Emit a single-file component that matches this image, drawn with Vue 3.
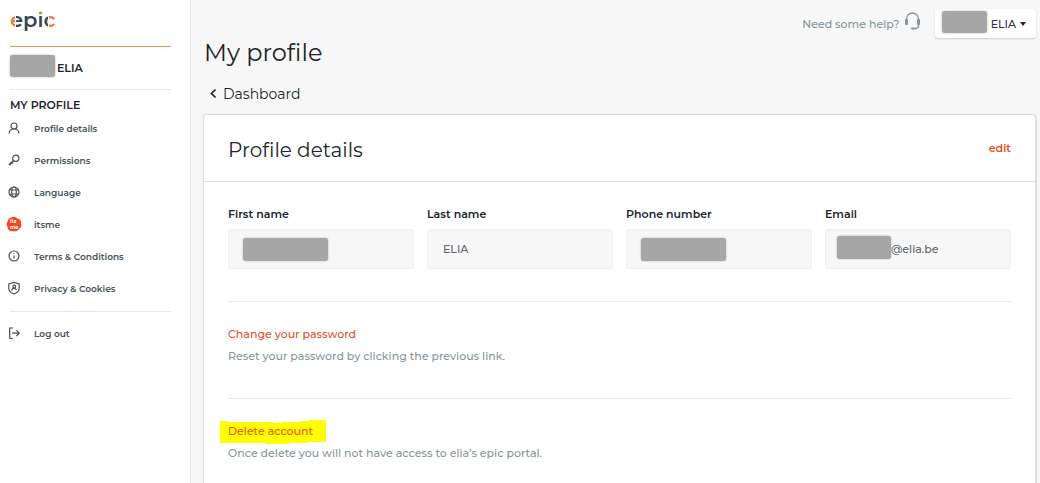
<script setup>
const links = [
  { label: 'Profile details', icon: 'user' },
  { label: 'Permissions', icon: 'key' },
  { label: 'Language', icon: 'globe' },
  { label: 'itsme', icon: 'itsme' },
  { label: 'Terms & Conditions', icon: 'info' },
  { label: 'Privacy & Cookies', icon: 'shield' }
]
const fields = [
  { id: 'first', label: 'First name', value: '', mask: 'wide' },
  { id: 'last', label: 'Last name', value: 'ELIA', mask: '' },
  { id: 'phone', label: 'Phone number', value: '', mask: 'wide' },
  { id: 'email', label: 'Email', value: '@elia.be', mask: 'prefix' }
]
</script>

<template>
  <div class="page">
    <aside class="sidebar">
      <a class="logo" href="#" aria-label="epic">
        <svg width="50" height="40" viewBox="0 0 50 40">
          <defs>
            <linearGradient id="ge" gradientUnits="userSpaceOnUse" x1="0" y1="0" x2="12" y2="0">
              <stop offset=".4" stop-color="#ee7d32" /><stop offset=".4" stop-color="#fff" />
              <stop offset=".5" stop-color="#fff" /><stop offset=".5" stop-color="#36474d" />
            </linearGradient>
            <linearGradient id="gi" gradientUnits="userSpaceOnUse" x1="0" y1="0" x2="0" y2="40">
              <stop offset=".38" stop-color="#ee7d32" /><stop offset=".38" stop-color="#36474d" />
            </linearGradient>
            <linearGradient id="gc" gradientUnits="userSpaceOnUse" x1="32" y1="0" x2="44" y2="0">
              <stop offset=".5" stop-color="#36474d" /><stop offset=".5" stop-color="#fff" />
              <stop offset=".62" stop-color="#fff" /><stop offset=".62" stop-color="#ee7d32" />
            </linearGradient>
          </defs>
          <text class="wordmark" x="0" y="27"><tspan fill="url(#ge)">e</tspan><tspan fill="#36474d">p</tspan><tspan fill="url(#gi)">i</tspan><tspan fill="url(#gc)">c</tspan></text>
        </svg>
      </a>
      <div class="person"><span class="mask small"></span><span>ELIA</span></div>
      <h2>MY PROFILE</h2>
      <nav>
        <a v-for="link in links" :key="link.label" href="#">
          <svg v-if="link.icon === 'user'" viewBox="0 0 14 14"><circle cx="7" cy="5" r="3" /><path d="M2.200 12.600V12c0-2.400 2-4 4.800-4s4.800 1.600 4.800 4v.6" /></svg>
          <svg v-else-if="link.icon === 'key'" viewBox="0 0 14 14"><circle cx="8.800" cy="5.200" r="3.100" /><path d="M6.500 7.600 2.200 11.900M2 10.700l1.500 1.500M4.500 9.300l1.300 1.300" stroke-width="1.600" /></svg>
          <svg v-else-if="link.icon === 'globe'" viewBox="0 0 14 14"><circle cx="7" cy="7" r="5" /><ellipse cx="7" cy="7" rx="2.300" ry="5" /><path d="M2.500 5h9M2.500 9h9" /></svg>
          <svg v-else-if="link.icon === 'itsme'" class="brand" viewBox="0 0 16 16">
            <path d="M7 .8Q8.300.5 9.300 1.300L13.700 3.400Q14.900 4.100 15 5.500L15.300 9.500Q15.200 11 14.200 12L11.600 14.500Q10.500 15.400 9 15.300L4.500 15Q3.100 14.700 2.400 13.500L.9 9.500Q.4 8.200.9 6.900L2.400 3.500Q3 2.300 4.300 1.900Z" />
            <text x="4" y="7">its</text><text x="4" y="13">me</text>
          </svg>
          <svg v-else-if="link.icon === 'info'" viewBox="0 0 14 14"><circle cx="7" cy="7" r="5" /><path d="M7 6.500v3M7 4v1" /></svg>
          <svg v-else viewBox="0 0 14 14"><path d="M7 1.400 12.200 3v4.200c0 2.700-2.200 4.600-5.200 5.700-3-1.100-5.200-3-5.200-5.700V3Z" /><circle cx="7.300" cy="5.600" r="1.400" /><path d="M4.700 9.600c.2-1.600 1-2.500 2.400-2.500 1.300 0 2.100.8 2.300 2.100" /></svg>
          <span>{{ link.label }}</span>
        </a>
      </nav>
      <a class="logout" href="#">
        <svg viewBox="0 0 14 14"><path d="M6 2H2.700v10.500H6M5 7.200h7M9.400 4.300l2.800 2.900-2.800 2.900" /></svg>
        <span>Log out</span>
      </a>
    </aside>

    <main>
      <header class="top">
        <a class="help" href="#">Need some help?
          <svg width="17" height="19" viewBox="0 0 17 19"><path d="M2.500 8V7a6 6 0 0 1 12 0v7q0 2.500-3 2.500H9" fill="none" stroke="#87969d" stroke-width="1.300" /><rect x="1" y="7" width="3" height="6" rx="1" /><rect x="13" y="7" width="3" height="6" rx="1" /><rect x="7" y="15.500" width="4" height="2" rx="1" /></svg>
        </a>
        <button class="account"><span class="mask small"></span><span>ELIA</span><i class="caret"></i></button>
      </header>
      <h1>My profile</h1>
      <a class="back" href="#">
        <svg width="8" height="12" viewBox="0 0 8 12"><path d="M6.500 1.500 2.500 5.500l4 4" fill="none" stroke="#222" stroke-width="1.700" /></svg>
        <span>Dashboard</span>
      </a>
      <section class="card">
        <div class="card-head"><h3>Profile details</h3><button class="edit">edit</button></div>
        <div class="card-body">
          <div class="fields">
            <div v-for="f in fields" :key="f.id" class="field">
              <label :for="f.id">{{ f.label }}</label>
              <div class="control">
                <input :id="f.id" type="text" readonly :value="f.value" :class="f.mask">
                <span v-if="f.mask" class="mask cover" :class="f.mask"></span>
              </div>
            </div>
          </div>
          <div class="block">
            <a href="#">Change your password</a>
            <p>Reset your password by clicking the previous link.</p>
          </div>
          <div class="block">
            <a href="#" class="marked">
              <svg class="marker" width="106" height="24" viewBox="0 0 106 24"><path d="M0 1h8v1h45v1h8V2h19V1h9V0h16v1h1v21H88v1H69v1H45v-1H0Z" fill="#ff0" /></svg>
              <span>Delete account</span>
            </a>
            <p>Once delete you will not have access to elia’s epic portal.</p>
          </div>
        </div>
      </section>
    </main>
  </div>
</template>

<style>
body { margin: 0; background: #f7f7f7; }
</style>

<style scoped>
* { box-sizing: border-box; }
.page { display: flex; min-height: 100vh; font-family: Montserrat, Inter, "Open Sans", sans-serif; font-size: 11px; font-weight: 500; color: #212529; background: #f7f7f7; }
a { color: inherit; text-decoration: none; }
h1, h2, h3, p { margin: 0; }
button { border: 0; font: inherit; cursor: pointer; }

.sidebar { flex: 0 0 191px; padding: 0 19px 0 10px; background: #fff; border-right: 1px solid #e4e4e4; }
.logo { display: block; height: 47px; border-bottom: 1px solid #ee9460; }
.logo svg { display: block; }
.wordmark { font-size: 21px; font-weight: 600; }
.person { display: flex; align-items: center; gap: 2px; height: 43px; font-weight: 600; border-bottom: 1px solid #e5e7e8; }
.mask { display: block; background: #a6a6a6; border-radius: 3px; box-shadow: 0 0 2px #a6a6a6; }
.mask.small { width: 45px; height: 22px; }
.person .mask { margin-bottom: 4px; }
h2 { padding-top: 7px; font-size: 11px; line-height: 16px; font-weight: 600; }
nav { padding-bottom: 7px; border-bottom: 1px solid #e5e7e8; margin-top: -1px; }
nav a, .logout { display: flex; align-items: center; gap: 13px; height: 32px; font-size: 9px; font-weight: 600; color: #45545a; }
nav svg, .logout svg { flex: none; width: 14px; height: 14px; margin-left: -3px; fill: none; stroke: #45545a; stroke-width: 1.2; }
nav a svg.brand { width: 16px; height: 16px; margin: 0 -1px 0 -4px; fill: #f9461c; stroke: none; }
.brand text { font-size: 5px; font-weight: 700; fill: #fff; }
.logout { margin-top: 5px; }

main { flex: 1; min-width: 0; display: flex; flex-direction: column; padding: 9px 4px 0 12px; }
.top { display: flex; justify-content: flex-end; align-items: center; height: 29px; }
.help { display: flex; align-items: center; gap: 4px; margin-right: 14px; color: #87969d; }
.help svg { fill: #87969d; margin-bottom: 4px; }
.account { display: flex; align-items: center; gap: 4px; height: 29px; padding: 0 10px 0 7px; background: #fff; color: #333; border-radius: 3px; box-shadow: 0 1px 2px #ccc; }
.account .mask { margin-bottom: 4px; }
.caret { border: 3px solid transparent; border-top: 4px solid #222; border-bottom: 0; }
h1 { padding-left: 1px; font-size: 24px; line-height: 30px; font-weight: 400; }
.back { display: flex; align-items: center; align-self: flex-start; gap: 6px; height: 20px; margin: 16px 0 10px 6px; font-size: 14px; font-weight: 400; }
.card { flex: 1; background: #fff; border: 1px solid #dedede; border-bottom: 0; border-radius: 4px 4px 0 0; box-shadow: 1px 0 1px #ddd; }
.card-head { display: flex; align-items: center; justify-content: space-between; height: 67px; padding: 0 24px; border-bottom: 1px solid #dedede; }
h3 { padding-top: 4px; font-size: 20px; line-height: 28px; font-weight: 400; }
.edit { padding: 0; background: none; color: #e9511d; font-weight: 600; }
.card-body { padding: 24px 24px 0; }
.fields { display: grid; grid-template-columns: repeat(4, minmax(0, 1fr)); gap: 13px; margin-bottom: 32px; }
label { display: block; height: 23px; line-height: 16px; font-weight: 600; }
.control { position: relative; }
input { display: block; width: 100%; height: 40px; padding: 0 15px; border: 1px solid #f0f0f0; border-radius: 3px; background: #f7f7f7; font: inherit; color: #5b666c; outline: 0; }
input.prefix { padding-left: 65px; }
.cover { position: absolute; top: 9px; left: 15px; width: 85px; height: 23px; }
.cover.prefix { top: 7px; left: 12px; width: 54px; }
.block { height: 97px; padding-top: 24px; border-top: 1px solid #e6e9ea; line-height: 16px; color: #87969d; }
.block a { color: #e2512c; }
.block p { margin-top: 6px; }
.marked { position: relative; display: inline-block; }
.block .marked span { position: relative; color: #e25a00; }
.marker { position: absolute; top: -3px; left: -8px; }
</style>
